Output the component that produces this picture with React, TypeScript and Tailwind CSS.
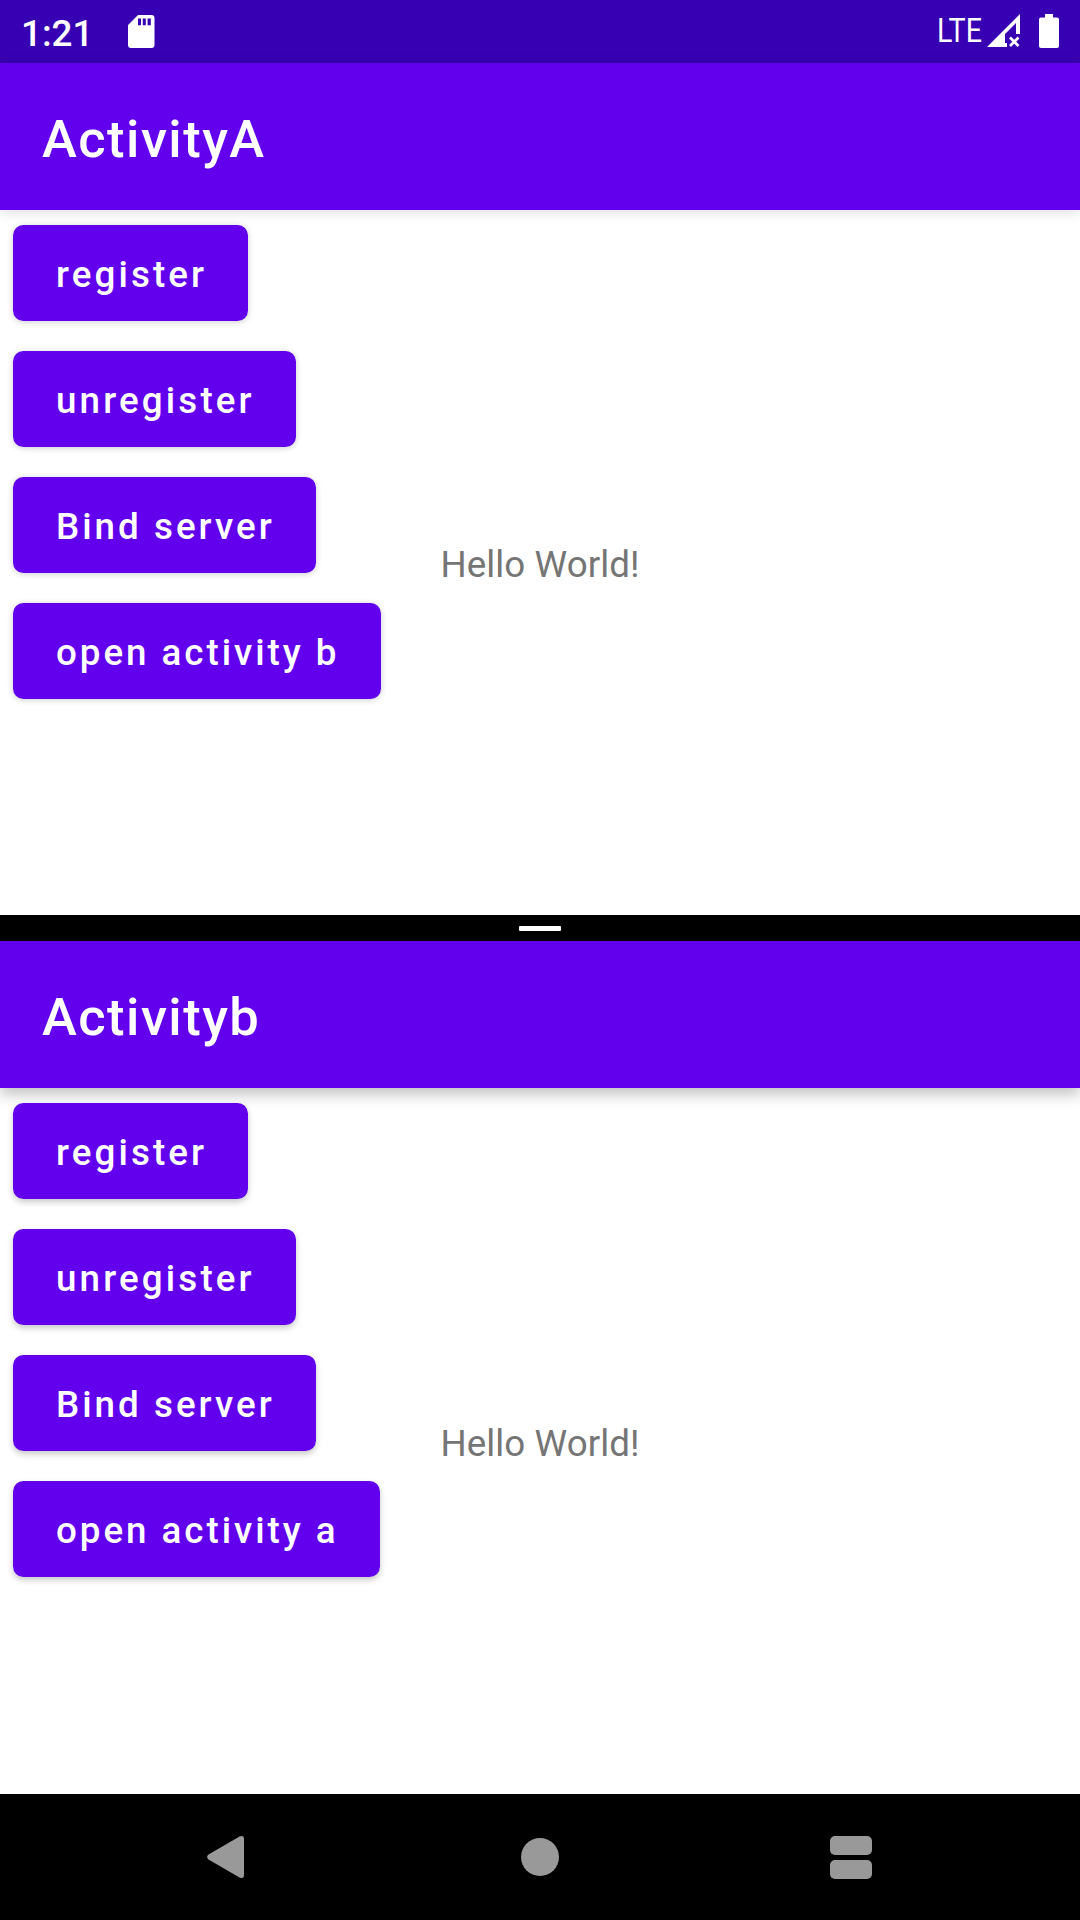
type Action = { label: string; width: string };

type PaneProps = {
  title: string;
  actions: Action[];
  headerShadow: string;
  buttonShadow: string;
  bodyHeight: string;
  helloTop: string;
};

const commonActions: Action[] = [
  { label: "register", width: "w-[235px] tracking-[3.1px]" },
  { label: "unregister", width: "w-[283px] tracking-[3.15px]" },
  { label: "Bind server", width: "w-[303px] tracking-[3.02px]" },
];

function StatusBar() {
  return (
    <div className="flex h-[63px] items-start bg-[#3700b3] text-white">
      <span className="ml-[21px] mt-[12px] w-[75px] text-[36.75px] leading-[43px] font-medium whitespace-nowrap">1:21</span>
      <svg className="ml-[32px] mt-[15px] h-[33px] w-[27px]" viewBox="0 0 27 33" fill="currentColor">
        <path
          fillRule="evenodd"
          d="M10 0H23.5Q26.5 0 26.5 3V30Q26.5 33 23.5 33H3Q0 33 0 30V10ZM10 3.5V10.2H13V3.5ZM14.8 3.5V10.2H17.8V3.5ZM19.6 3.5V10.2H22.8V3.5Z"
        />
      </svg>
      <span className="ml-auto mt-[12px] w-[50px] origin-left scale-x-[.88] text-[32.5px] leading-[38px] whitespace-nowrap">LTE</span>
      <svg className="mt-[14px] h-[33px] w-[33px]" viewBox="0 0 33 33" fill="currentColor">
        <path fillRule="evenodd" d="M33 0V20H29V9L18 20V29H20V33H0Z" />
        <path d="M23 23.5L31.5 32M31.5 23.5L23 32" fill="none" stroke="currentColor" strokeWidth="2.7" />
      </svg>
      <svg className="ml-[19px] mr-[21px] mt-[14px] h-[34px] w-[20px]" viewBox="0 0 20 34" fill="currentColor">
        <path d="M6 0H14V3.5H18Q20 3.5 20 5.5V32Q20 34 18 34H2Q0 34 0 32V5.5Q0 3.5 2 3.5H6Z" />
      </svg>
    </div>
  );
}

function Pane({ title, actions, headerShadow, buttonShadow, bodyHeight, helloTop }: PaneProps) {
  return (
    <section>
      <header className={`relative flex h-[147px] items-center bg-[#6200ee] pl-[42px] text-white ${headerShadow}`}>
        <h1 className="mt-[5px] text-[52.5px] leading-[62px] font-medium tracking-[1.45px]">{title}</h1>
      </header>
      <div className={`relative ${bodyHeight}`}>
        <div className="flex flex-col items-start gap-[30px] pt-[15px] pl-[13px]">
          {actions.map(({ label, width }) => (
            <button
              key={label}
              className={`h-24 rounded-[10.5px] bg-[#6200ee] pl-[43px] text-left text-[36.75px] leading-[43px] font-medium whitespace-nowrap text-white ${width} ${buttonShadow}`}
            >
              <span className="relative top-px">{label}</span>
            </button>
          ))}
        </div>
        <p className={`absolute inset-x-0 ${helloTop} text-center text-[36.75px] leading-[43px] tracking-[0.08px] text-[#757575]`}>Hello World!</p>
      </div>
    </section>
  );
}

export default function App() {
  return (
    <div className="h-[1920px] w-[1080px] overflow-hidden bg-white font-[Roboto,sans-serif]">
      <StatusBar />
      <Pane
        title="ActivityA"
        actions={[...commonActions, { label: "open activity b", width: "w-[368px] tracking-[2.96px]" }]}
        headerShadow="shadow-[0_2px_12px_rgba(0,0,0,0.14)]"
        buttonShadow="shadow-[0_1px_6px_rgba(0,0,0,0.2)]"
        bodyHeight="h-[705px]"
        helloTop="top-[333px]"
      />
      <div className="flex h-[26px] items-start justify-center bg-black pt-[11px]">
        <div className="h-[5px] w-[42px] rounded-[1px] bg-white" />
      </div>
      <Pane
        title="Activityb"
        actions={[...commonActions, { label: "open activity a", width: "w-[367px] tracking-[2.96px]" }]}
        headerShadow="shadow-[0_6px_14px_rgba(0,0,0,0.25)]"
        buttonShadow="shadow-[0_3px_6px_rgba(0,0,0,0.22)]"
        bodyHeight="h-[706px]"
        helloTop="top-[334px]"
      />
      <nav className="flex h-[126px] items-center justify-between bg-black pr-[208px] pl-[207px] text-[#999999]">
        <svg className="h-[42px] w-[37px]" viewBox="0 0 37 42" fill="currentColor">
          <path d="M32.5 .6Q37 -1.2 37 3V39Q37 43.2 32.5 41.4L1.5 23.4Q-1.3 21 1.5 18.6Z" />
        </svg>
        <div className="mr-[8.5px] ml-[14.5px] size-[38px] rounded-full bg-[#999999]" />
        <div className="flex flex-col gap-[5px]">
          <div className="h-[19px] w-[42px] rounded-[5px] bg-[#999999]" />
          <div className="h-[19px] w-[42px] rounded-[5px] bg-[#999999]" />
        </div>
      </nav>
    </div>
  );
}
